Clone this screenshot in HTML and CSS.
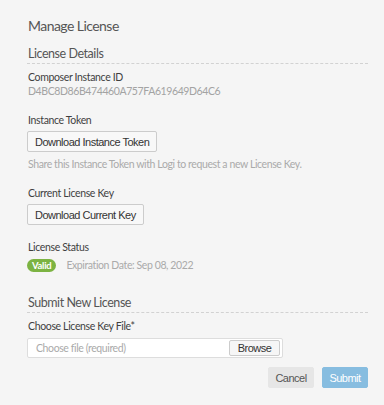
FILE: index.html
```html
<!DOCTYPE html>
<html lang="en">
<head>
    <meta charset="UTF-8">
    <title>Manage License</title>
    <link rel="stylesheet" href="styles.css">
</head>
<body>
    <div class="panel">
        <h1 class="page-title">Manage License</h1>

        <h2 class="section-title">License Details</h2>

        <div class="field">
            <div class="label">Composer Instance ID</div>
            <div class="value">D4BC8D86B474460A757FA619649D64C6</div>
        </div>

        <div class="field">
            <div class="label">Instance Token</div>
            <button class="btn">Download Instance Token</button>
            <div class="hint">Share this Instance Token with Logi to request a new License Key.</div>
        </div>

        <div class="field">
            <div class="label">Current License Key</div>
            <button class="btn">Download Current Key</button>
        </div>

        <div class="field">
            <div class="label">License Status</div>
            <div class="status">
                <span class="badge">Valid</span>
                <span class="expires">Expiration Date: Sep 08, 2022</span>
            </div>
        </div>

        <h2 class="section-title submit-title">Submit New License</h2>

        <div class="field">
            <div class="label">Choose License Key File*</div>
            <div class="file-input">
                <span class="placeholder">Choose file (required)</span>
                <button class="btn browse">Browse</button>
            </div>
        </div>

        <div class="actions">
            <button class="btn cancel">Cancel</button>
            <button class="btn submit">Submit</button>
        </div>
    </div>
</body>
</html>
```

FILE: styles.css
```css
body {
    margin: 0;
    background: #f5f5f5;
    font-family: Lato, "Open Sans", sans-serif;
    color: #4a4a4a;
}

.panel {
    padding: 17px 16px 0 27px;
}

.page-title {
    font-size: 14px;
    font-weight: normal;
    letter-spacing: -0.55px;
    color: #555;
    margin: 0 0 11px 1px;
    line-height: 18px;
}

.section-title {
    font-size: 12.5px;
    font-weight: normal;
    letter-spacing: -0.45px;
    color: #555;
    margin: 0 0 6px 0;
    line-height: 16px;
    padding-left: 1px;
    padding-bottom: 1px;
    border-bottom: 1px dashed #d2d2d2;
}

.submit-title {
    margin-top: 22px;
}

.field {
    margin-bottom: 15px;
}

.label {
    font-size: 10.5px;
    letter-spacing: -0.35px;
    line-height: 14px;
    color: #3f3f3f;
    padding-left: 1px;
}

.value {
    font-size: 10.5px;
    letter-spacing: -0.4px;
    line-height: 14px;
    color: #a3a3a3;
    padding-left: 1px;
}

.hint {
    font-size: 10.5px;
    letter-spacing: -0.4px;
    line-height: 14px;
    color: #aaa;
    margin-top: 5px;
    padding-left: 1px;
}

.btn {
    font-family: "Liberation Sans", Arial, sans-serif;
    font-size: 11px;
    letter-spacing: -0.5px;
    color: #333;
    background: #f8f8f8;
    border: 1px solid #ccc;
    border-radius: 2px;
    height: 21px;
    padding: 0 7px;
    margin-top: 4px;
}

.status {
    display: flex;
    align-items: center;
    gap: 10px;
    height: 16px;
    margin-top: 3px;
}

.badge {
    background: #7cb342;
    color: #fff;
    font-size: 9.5px;
    font-weight: bold;
    letter-spacing: -0.3px;
    border-radius: 7px;
    padding: 0 5px;
    line-height: 13px;
}

.expires {
    font-size: 10.5px;
    letter-spacing: -0.4px;
    color: #aaa;
}

.file-input {
    display: flex;
    align-items: center;
    justify-content: space-between;
    box-sizing: border-box;
    width: 256px;
    height: 20px;
    background: #fff;
    border: 1px solid #ddd;
    border-radius: 2px;
    padding: 0 2px 0 8px;
    margin-top: 5px;
}

.placeholder {
    font-size: 10.5px;
    letter-spacing: -0.4px;
    color: #aaa;
}

.browse {
    height: 16px;
    width: 51px;
    margin-top: 0;
    padding: 0;
    background: #f6f6f6;
}

.actions {
    display: flex;
    justify-content: flex-end;
    gap: 8px;
    width: 341px;
    margin-top: -6px;
}

.cancel,
.submit {
    width: 46px;
    padding: 0;
    margin-top: 0;
}

.cancel {
    background: #e6e6e6;
    border-color: #e6e6e6;
    color: #555;
}

.submit {
    background: #87bde0;
    border-color: #87bde0;
    color: #fff;
}
```
